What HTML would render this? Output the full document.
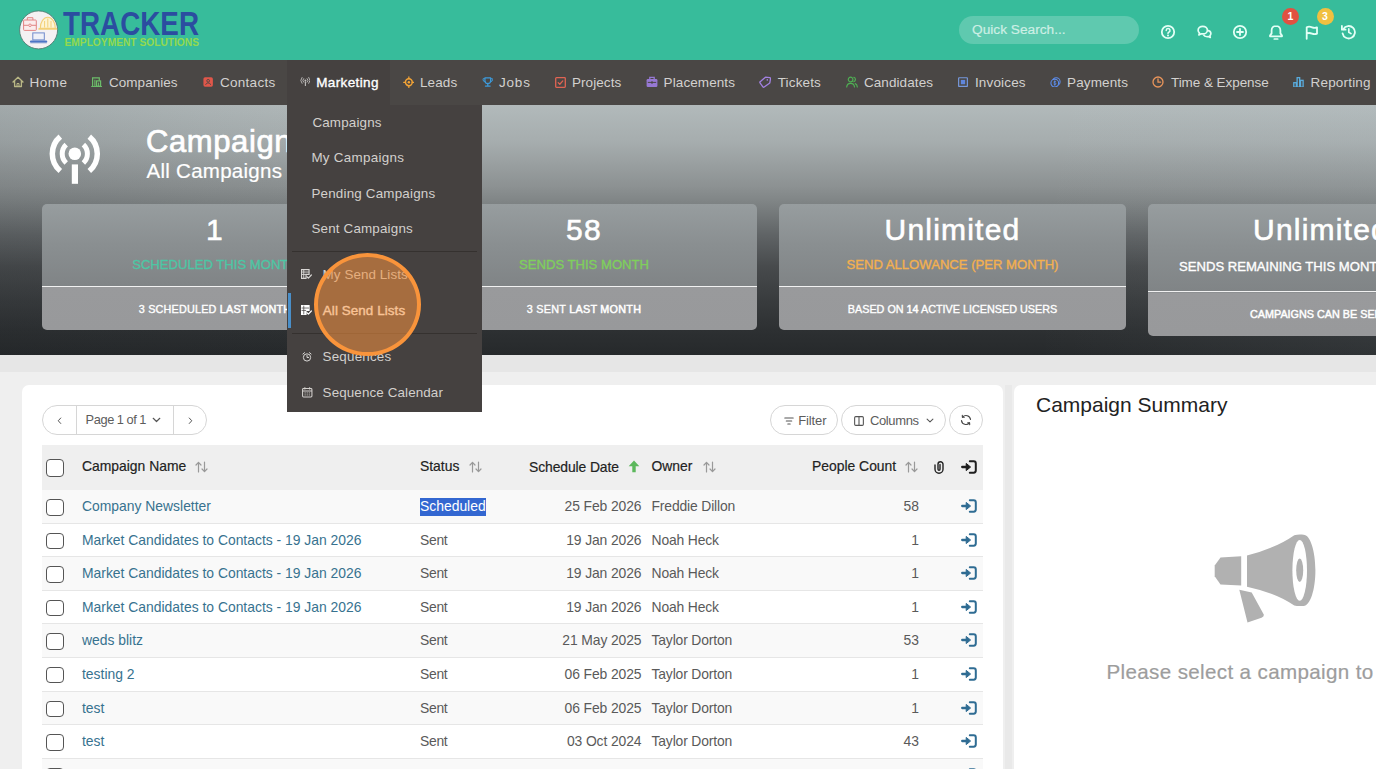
<!DOCTYPE html>
<html lang="en">
<head>
<meta charset="utf-8">
<title>Campaigns</title>
<style>
*{box-sizing:border-box;margin:0;padding:0}
html,body{width:1376px;height:769px;overflow:hidden}
body{font-family:"Liberation Sans",sans-serif;background:#efefef;position:relative;color:#333}
.abs{position:absolute}
.t{position:absolute;white-space:nowrap;line-height:1}
.med{-webkit-text-stroke:.35px currentColor}
/* top bar */
#top{left:0;top:0;width:1376px;height:60px;background:#37bc9b}
#search{left:959px;top:16px;width:180px;height:28px;border-radius:14px;background:rgba(255,255,255,.2)}
#top svg{position:absolute}
.badge{position:absolute;width:17px;height:17px;border-radius:50%;color:#fff;font-size:10.5px;font-weight:bold;text-align:center;line-height:17px}
/* nav */
#nav{z-index:1;left:0;top:60px;width:1376px;height:44.500px;background:#4a4745}
#nav .t{top:16.2px;font-size:13.5px;color:#d3d1cf}
#nav svg{position:absolute}
#navact{left:287px;top:0;width:103px;height:44.500px;background:#454140}
/* hero */
#hero{left:0;top:104px;width:1376px;height:250.7px;overflow:hidden;background:linear-gradient(90deg,rgba(20,25,30,.10) 0,rgba(20,25,30,.04) 15%,rgba(20,25,30,0) 28%,rgba(200,215,225,0) 75%,rgba(200,215,225,.06) 100%),linear-gradient(180deg,#b2babb 0%,#a6adae 15%,#8c9192 33%,#7f8485 39%,#606466 52%,#474a4c 65%,#393c3e 78%,#2d3032 90%,#26292b 100%)}
.stat{position:absolute;top:100px;height:126px;border-radius:5px;background:linear-gradient(180deg,#979d9f 0,#8a8f91 40px,#808486 82px,#999a9c 83px,#98999b 100%)}
.stat .ln{position:absolute;left:0;right:0;top:81.6px;height:1.25px;background:#f1f1f1}
.stat .big{position:absolute;left:0;right:0;text-align:center;color:#fff;font-size:30px;top:11px;line-height:1;letter-spacing:1.2px;-webkit-text-stroke:.6px #fff}
.stat .lab{position:absolute;left:0;right:0;text-align:center;font-size:13.1px;top:53.5px;line-height:1}
.stat .sub b{font-weight:normal;-webkit-text-stroke:.5px #fff}
.stat .sub{position:absolute;left:0;right:0;text-align:center;font-size:10.8px;top:100px;line-height:1;color:#fff}
/* dropdown */
#dd{left:287px;top:104px;width:195px;height:307.5px;background:#454140}
#dd .t{font-size:13.4px;color:#d3d0cd}
#dd .sep{position:absolute;left:5px;right:5px;height:1px;background:#35312f}
#dd svg{position:absolute;left:14px}
#ring{left:314.2px;top:253.2px;width:107px;height:103px;border-radius:50%;background:rgba(245,146,62,.55);border:4.5px solid #f9943b}
/* cards */
#card{left:22px;top:385px;width:981px;height:400px;background:#fff;border-radius:7px}
#side{left:1014px;top:385px;width:380px;height:400px;background:#fff;border-radius:7px}
.pill{position:absolute;top:20px;height:30px;border:1px solid #d6d6d6;border-radius:15px;background:#fff}
.pill .t{font-size:13.5px;color:#5c5c5c;top:7.5px}
.pill svg{position:absolute}
#thead{left:20px;top:60px;width:941px;height:44.5px;background:#efefef}
.row{position:absolute;left:20px;width:941px;border-bottom:1px solid #e6e6e6;background:#fff}
.row.odd{background:#f9f9f9}
.cb{position:absolute;left:4px;width:18px;height:16.5px;border:1.3px solid #555;border-radius:4px;background:#fff}
.row .t{font-size:13.9px;top:10px;color:#5a5a5a}
.row .nm{left:40px;color:#37728f}
.row .st{left:378px;letter-spacing:-.3px}
.row .dt{right:341.5px;letter-spacing:-.1px}
.row .ow{left:609.5px;letter-spacing:-.15px}
.row .pc{right:64px}
.sel{background:#3367d1;color:#fff;display:inline-block;padding:2px 0 2px;margin:-2px 0;letter-spacing:0}
.ent{position:absolute;left:919.2px;top:9.3px}
.srt{position:absolute;top:16px}
#thead .t{font-size:13.9px;top:14.5px;color:#222;-webkit-text-stroke:.18px #222}
</style>
</head>
<body>
<div id="top" class="abs">
  <!-- logo -->
  <svg style="left:18px;top:9px" width="185" height="42" viewBox="0 0 185 42">
    <circle cx="20.600" cy="20.900" r="19" fill="#f4f1f3" stroke="#4f7a70" stroke-width=".9"/>
    <rect x="5.600" y="11" width="12.700" height="10.400" rx=".8" fill="#fbecec" stroke="#e28484" stroke-width="1"/>
    <path d="M9.300 11V8.700h5.600V11M5.600 16.300h12.700" fill="none" stroke="#e28484" stroke-width="1"/>
    <circle cx="12" cy="16.300" r="1.300" fill="#fbecec" stroke="#e28484" stroke-width=".9"/>
    <path d="M22.300 19.200a7.500 11 0 0 1 15 0z" fill="#fdf4d4" stroke="#f3d077" stroke-width="1.100"/>
    <path d="M21.200 19.900h17.200" stroke="#f3d077" stroke-width="1.800" stroke-linecap="round"/>
    <path d="M26.600 12v6.500M29.800 9.500v9M33 12v6.500" stroke="#f3d077" stroke-width="1"/>
    <rect x="14.800" y="23.900" width="11.500" height="7" fill="#eef0f8" stroke="#6f8acb" stroke-width="1"/>
    <path d="M13 32.700h15.200" stroke="#4d75c6" stroke-width="2.200" stroke-linecap="round"/>
    <path d="M12.300 34.300h16.600" stroke="#b9c3df" stroke-width=".7"/>
    <text x="45" y="26" font-family="Liberation Sans,sans-serif" font-weight="bold" font-size="33" fill="#2b4da0" textLength="136" lengthAdjust="spacingAndGlyphs">TRACKER</text>
    <text x="46.5" y="37" font-family="Liberation Sans,sans-serif" font-weight="bold" font-size="10.6" fill="#93d94e" textLength="134.5" lengthAdjust="spacingAndGlyphs">EMPLOYMENT SOLUTIONS</text>
  </svg>
  <div id="search" class="abs"></div>
  <div class="t" style="left:972px;top:23px;font-size:13.7px;color:#cdefe5;-webkit-text-stroke:.2px #cdefe5">Quick Search...</div>
  <!-- help -->
  <svg style="left:1160px;top:24px" width="16" height="16" viewBox="0 0 16 16"><circle cx="8" cy="8" r="6.200" fill="none" stroke="#e4fff6" stroke-width="1.800"/><path d="M6.200 6.400a1.900 1.900 0 1 1 2.600 1.800c-.5.300-.8.600-.8 1.200" fill="none" stroke="#e4fff6" stroke-width="1.500" stroke-linecap="round"/><circle cx="8" cy="11.400" r="1" fill="#e4fff6"/></svg>
  <!-- chat -->
  <svg style="left:1196px;top:25px" width="17" height="14" viewBox="0 0 18 16"><path d="M7 1.600c3 0 5.300 1.900 5.300 4.300S10 10.200 7 10.200c-.6 0-1.200-.1-1.700-.2L2.600 11.300l.6-2.300C2.200 8.200 1.700 7.100 1.700 5.900 1.700 3.500 4 1.600 7 1.600z" fill="none" stroke="#e4fff6" stroke-width="1.900" stroke-linejoin="round"/><path d="M12.300 6.200c2.300.2 4 1.700 4 3.600 0 1-.4 1.800-1.200 2.500l.5 2-2.300-1.100c-.5.100-.9.200-1.400.2-1.900 0-3.500-.9-4.200-2.300" fill="none" stroke="#e4fff6" stroke-width="1.900" stroke-linejoin="round"/></svg>
  <!-- plus -->
  <svg style="left:1232px;top:24px" width="16" height="16" viewBox="0 0 16 16"><circle cx="8" cy="8" r="6.200" fill="none" stroke="#e4fff6" stroke-width="1.800"/><path d="M8 5v6M5 8h6" stroke="#e4fff6" stroke-width="1.800" stroke-linecap="round"/></svg>
  <!-- bell -->
  <svg style="left:1268px;top:24px" width="16" height="17" viewBox="0 0 16 17"><path d="M8 1.900c-2.600 0-4.400 1.900-4.400 4.500v3L2 11.600v.7h12v-.7l-1.600-2.200v-3c0-2.600-1.800-4.500-4.400-4.500z" fill="none" stroke="#e4fff6" stroke-width="1.800" stroke-linejoin="round"/><path d="M6.300 15h3.400" stroke="#e4fff6" stroke-width="1.700" stroke-linecap="round"/></svg>
  <!-- flag -->
  <svg style="left:1304px;top:24px" width="16" height="17" viewBox="0 0 16 17"><path d="M2.700 14.800V3.200c2-.9 3.600-.6 5.300.1s3.300.8 5 .1v6.300c-1.700.7-3.300.6-5-.1s-3.300-1-5.300-.1" fill="none" stroke="#e4fff6" stroke-width="1.800" stroke-linejoin="round" stroke-linecap="round"/></svg>
  <!-- history -->
  <svg style="left:1340px;top:24px" width="17" height="16" viewBox="0 0 17 16"><path d="M3.300 5.200A6.200 6.200 0 1 1 2.600 9.300" fill="none" stroke="#e4fff6" stroke-width="1.800" stroke-linecap="round"/><path d="M1.900 2v3.700h3.700" fill="none" stroke="#e4fff6" stroke-width="1.800" stroke-linecap="round" stroke-linejoin="round"/><path d="M8.800 4.900v3.300l2.200 1.400" fill="none" stroke="#e4fff6" stroke-width="1.700" stroke-linecap="round" stroke-linejoin="round"/></svg>
  <div class="badge" style="left:1282px;top:7.500px;background:#e25141">1</div>
  <div class="badge" style="left:1316.500px;top:7.500px;background:#f1c040">3</div>
</div>
<div id="nav" class="abs">
  <div id="navact" class="abs"></div>
  <!-- home -->
  <svg style="left:12px;top:16px" width="12" height="12" viewBox="0 0 12 12"><path d="M1 6L6 1.200 11 6M2.600 5v5.500h6.800V5" fill="none" stroke="#b9b785" stroke-width="1.300" stroke-linejoin="round" stroke-linecap="round"/><path d="M5 10.500V7.500h2v3" fill="none" stroke="#b9b785" stroke-width="1"/></svg>
  <div class="t" style="left:29.5px;letter-spacing:0.47px">Home</div>
  <!-- companies -->
  <svg style="left:91px;top:16.700px" width="11.400" height="10.600" viewBox="0 0 11.400 10.600"><path d="M1.600 9.200V.900h6.700v2.800" fill="none" stroke="#6cbd6a" stroke-width="1.200"/><path d="M3.900 2.800v6.400" stroke="#6cbd6a" stroke-width="1.100"/><rect x="5.600" y="3.900" width="4" height="5.300" fill="none" stroke="#6cbd6a" stroke-width="1.200"/><path d="M7.600 5.600v3.600" stroke="#6cbd6a" stroke-width="1"/><path d="M.2 9.800h11" stroke="#6cbd6a" stroke-width="1.500"/></svg>
  <div class="t" style="left:109px;letter-spacing:0.03px">Companies</div>
  <!-- contacts -->
  <svg style="left:203px;top:17px" width="10.300" height="10" viewBox="0 0 11 11"><rect x=".3" y=".3" width="10.400" height="10.400" rx="1.800" fill="#e0574a"/><circle cx="5.500" cy="4.200" r="1.500" fill="none" stroke="#4a4745" stroke-width="1"/><path d="M2.800 8.600c.3-1.500 1.300-2 2.700-2s2.400.5 2.700 2" fill="none" stroke="#4a4745" stroke-width="1"/></svg>
  <div class="t" style="left:219.9px;letter-spacing:0.3px">Contacts</div>
  <!-- marketing -->
  <svg style="left:299.500px;top:17.300px" width="10.800" height="9.900" viewBox="0 0 12 11"><circle cx="6" cy="3.800" r="1.100" fill="#c2c0be"/><path d="M6 5v5" stroke="#c2c0be" stroke-width="1.200"/><path d="M4 1.800a2.800 2.800 0 0 0 0 4M8 1.800a2.800 2.800 0 0 1 0 4M2.200.500a5 5 0 0 0 0 6.600M9.800.500a5 5 0 0 1 0 6.600" fill="none" stroke="#c2c0be" stroke-width="1" stroke-linecap="round"/></svg>
  <div class="t med" style="left:316.2px;letter-spacing:0.38px;color:#fff">Marketing</div>
  <!-- leads -->
  <svg style="left:402.800px;top:15.900px" width="11.700" height="12.500" viewBox="0 0 13 14"><circle cx="6.500" cy="7" r="3.800" fill="none" stroke="#f2a336" stroke-width="1.700"/><circle cx="6.500" cy="7" r="1.400" fill="#f2a336"/><path d="M6.500 1v2M6.500 11v2M.700 7h2M10.300 7h2" stroke="#f2a336" stroke-width="1.400" stroke-linecap="round"/></svg>
  <div class="t" style="left:420px;letter-spacing:0.11px">Leads</div>
  <!-- jobs -->
  <svg style="left:481.800px;top:17.100px" width="11.600" height="10.400" viewBox="0 0 13 12"><path d="M3.200 1h6.600v3.200a3.300 3.300 0 0 1-6.600 0z" fill="none" stroke="#3d9bdb" stroke-width="1.400" stroke-linejoin="round"/><path d="M3.200 2H1v1a2.300 2.300 0 0 0 2.500 2.300M9.800 2H12v1a2.300 2.300 0 0 1-2.500 2.300" fill="none" stroke="#3d9bdb" stroke-width="1.100"/><path d="M6.500 7.500v2M3.800 10.500h5.400" stroke="#3d9bdb" stroke-width="1.500" stroke-linecap="round"/></svg>
  <div class="t" style="left:499px;letter-spacing:0.8px">Jobs</div>
  <!-- projects -->
  <svg style="left:554.500px;top:16.500px" width="11" height="11" viewBox="0 0 11 11"><rect x=".7" y=".7" width="9.600" height="9.600" rx=".8" fill="none" stroke="#e06453" stroke-width="1.300"/><path d="M3.200 5.600l1.600 1.600 3-3.300" fill="none" stroke="#e06453" stroke-width="1.300" stroke-linecap="round" stroke-linejoin="round"/></svg>
  <div class="t" style="left:571.9px;letter-spacing:0.09px">Projects</div>
  <!-- placements -->
  <svg style="left:646px;top:16px" width="12" height="12" viewBox="0 0 12 12"><rect x=".6" y="3" width="10.800" height="8" rx="1.200" fill="#9678d3"/><path d="M3.800 3V1.300h4.400V3" fill="none" stroke="#9678d3" stroke-width="1.300"/><path d="M1.800 6.400h8.400" stroke="#4a4745" stroke-width="1"/><rect x="5" y="5.500" width="2" height="2" fill="#4a4745"/></svg>
  <div class="t" style="left:663.6px;letter-spacing:0.09px">Placements</div>
  <!-- tickets -->
  <svg style="left:759px;top:16px" width="12" height="12" viewBox="0 0 12 12"><path d="M5.800 1.200l4.300-.1c.5 0 .9.400.9.900l-.1 4.300-5 4.800c-.4.400-.9.400-1.300 0L1.200 7.600c-.4-.4-.4-.9 0-1.300z" transform="rotate(8 6 6)" fill="none" stroke="#a382e2" stroke-width="1.300" stroke-linejoin="round"/><circle cx="8.300" cy="3.900" r=".8" fill="#a382e2"/></svg>
  <div class="t" style="left:777.7px;letter-spacing:0.15px">Tickets</div>
  <!-- candidates -->
  <svg style="left:846px;top:16px" width="12" height="12" viewBox="0 0 12 12"><circle cx="4.600" cy="3.500" r="2.300" fill="none" stroke="#4fb053" stroke-width="1.200"/><path d="M.700 11c.2-2.400 1.700-3.700 3.900-3.700s3.700 1.300 3.900 3.700" fill="none" stroke="#4fb053" stroke-width="1.200" stroke-linecap="round"/><path d="M7.800 1.300a2.300 2.300 0 0 1 0 4.400M9.300 7.600c1.200.5 1.900 1.700 2 3.400" fill="none" stroke="#4fb053" stroke-width="1.200" stroke-linecap="round"/></svg>
  <div class="t" style="left:863.9px;letter-spacing:0.09px">Candidates</div>
  <!-- invoices -->
  <svg style="left:957.800px;top:16.800px" width="10" height="10.200" viewBox="0 0 11 11"><rect x=".7" y=".7" width="9.600" height="9.600" rx=".5" fill="none" stroke="#7698dc" stroke-width="1.300"/><rect x="3.100" y="3.100" width="4.800" height="4.800" fill="#5f86dc"/></svg>
  <div class="t" style="left:974.9px;letter-spacing:0.17px">Invoices</div>
  <!-- payments -->
  <svg style="left:1050px;top:16.600px" width="11" height="10.800" viewBox="0 0 12 12"><circle cx="6.800" cy="5.200" r="4.300" fill="none" stroke="#5d8ff0" stroke-width="1.200"/><circle cx="5.200" cy="6.800" r="4.300" fill="#4a4745" stroke="#5d8ff0" stroke-width="1.200"/><path d="M6.500 5.300c-.4-.5-2.400-.7-2.400.4s2.400.6 2.400 1.800-2.100 1-2.600.3M5.200 3.800v6" fill="none" stroke="#5d8ff0" stroke-width=".9"/></svg>
  <div class="t" style="left:1067px;letter-spacing:0.14px">Payments</div>
  <!-- time -->
  <svg style="left:1152px;top:16px" width="12" height="12" viewBox="0 0 12 12"><circle cx="6" cy="6" r="5" fill="none" stroke="#e9955b" stroke-width="1.300"/><path d="M6 3v3.200h2.600" fill="none" stroke="#e9955b" stroke-width="1.300" stroke-linecap="round" stroke-linejoin="round"/></svg>
  <div class="t" style="left:1171px;letter-spacing:-0.06px">Time &amp; Expense</div>
  <!-- reporting -->
  <svg style="left:1293.200px;top:16.600px" width="11" height="10.800" viewBox="0 0 11 11"><rect x=".7" y="5.800" width="2.600" height="4.500" fill="none" stroke="#5aaee0" stroke-width="1.300"/><rect x="4.100" y=".7" width="2.600" height="9.600" fill="none" stroke="#5aaee0" stroke-width="1.300"/><rect x="7.600" y="3.400" width="2.600" height="6.900" fill="none" stroke="#5aaee0" stroke-width="1.300"/></svg>
  <div class="t" style="left:1310.5px;letter-spacing:0.19px">Reporting</div>
</div>
<div id="hero" class="abs">
  <!-- broadcast icon -->
  <svg class="abs" style="left:48px;top:30px" width="54" height="52" viewBox="0 0 54 52">
    <circle cx="26.800" cy="19.800" r="6.300" fill="#fff"/>
    <rect x="23.800" y="30.400" width="6.200" height="19.400" fill="#fff"/>
    <path d="M18.2 10.600A12.600 12.600 0 0 0 18.2 29M35.400 10.600A12.600 12.600 0 0 1 35.400 29" fill="none" stroke="#fff" stroke-width="5"/>
    <path d="M12.300 2.600A22.500 22.500 0 0 0 12.300 37M41.300 2.600A22.500 22.500 0 0 1 41.300 37" fill="none" stroke="#fff" stroke-width="5.500"/>
  </svg>
  <div class="t" style="left:146px;top:21.5px;font-size:31px;color:#fff;letter-spacing:.6px;-webkit-text-stroke:.7px #fff">Campaigns</div>
  <div class="t" style="left:146.5px;top:57px;font-size:20.5px;color:#fff;letter-spacing:.27px;-webkit-text-stroke:.2px #fff">All Campaigns</div>
  <div class="stat" style="left:42px;width:346px">
    <div class="ln"></div>
    <div class="big med">1</div>
    <div class="lab med" style="color:#4dc6a4">SCHEDULED THIS MONTH</div>
    <div class="sub med" style="letter-spacing:.2px">3 SCHEDULED <b>LAST MONTH</b></div>
  </div>
  <div class="stat" style="left:411px;width:346px">
    <div class="ln"></div>
    <div class="big med">58</div>
    <div class="lab med" style="color:#7fcf5c">SENDS THIS MONTH</div>
    <div class="sub med" style="letter-spacing:.27px">3 SENT <b>LAST MONTH</b></div>
  </div>
  <div class="stat" style="left:779px;width:347px">
    <div class="ln"></div>
    <div class="big med">Unlimited</div>
    <div class="lab med" style="color:#f3b04f">SEND ALLOWANCE (PER MONTH)</div>
    <div class="sub med">BASED ON <b>14</b> ACTIVE LICENSED USERS</div>
  </div>
  <div class="stat" style="left:1148px;width:346px;height:132px;background:linear-gradient(180deg,#979d9f 0,#8a8f91 42px,#808486 88px,#999a9c 89px,#98999b 100%)">
    <div class="ln" style="top:87.1px"></div>
    <div class="big med">Unlimited</div>
    <div class="t med" style="left:31px;top:55.5px;font-size:13.1px;color:#fff">SENDS REMAINING THIS MONTH</div>
    <div class="t med" style="left:102px;top:104.5px;font-size:10.8px;color:#fff;-webkit-text-stroke:.45px #fff">CAMPAIGNS CAN BE SENT</div>
  </div>
</div>
<div class="abs" style="left:0;top:355px;width:1376px;height:17.3px;background:#e6e6e6"></div>
<div class="abs" style="left:1005px;top:385px;width:7px;height:390px;background:#e9e9e9"></div>
<div id="card" class="abs">
  <div class="pill" style="left:20px;width:165px">
    <div class="abs" style="left:33px;top:0;width:1px;height:28px;background:#d6d6d6"></div>
    <div class="abs" style="left:130px;top:0;width:1px;height:28px;background:#d6d6d6"></div>
    <svg style="left:13.500px;top:10.700px" width="5" height="7.500" viewBox="0 0 6 9"><path d="M4.500 1.200L1.500 4.500l3 3.300" fill="none" stroke="#555" stroke-width="1.200" stroke-linecap="round" stroke-linejoin="round"/></svg>
    <div class="t" style="left:42.5px;font-size:12.8px;letter-spacing:-.36px;word-spacing:-.3px;top:8.2px">Page 1 of 1</div>
    <svg style="left:109px;top:11px" width="9" height="6" viewBox="0 0 9 6"><path d="M1.200 1.300L4.500 4.500l3.300-3.200" fill="none" stroke="#555" stroke-width="1.200" stroke-linecap="round" stroke-linejoin="round"/></svg>
    <svg style="left:144.500px;top:10.700px" width="5" height="7.500" viewBox="0 0 6 9"><path d="M1.500 1.200l3 3.300-3 3.300" fill="none" stroke="#555" stroke-width="1.200" stroke-linecap="round" stroke-linejoin="round"/></svg>
  </div>
  <div class="pill" style="left:748px;width:68px">
    <svg style="left:12.500px;top:10.500px" width="10" height="8" viewBox="0 0 10 8"><path d="M.800 1h8.400M2.300 4h5.400M3.800 7h2.400" stroke="#555" stroke-width="1.100" stroke-linecap="round"/></svg>
    <div class="t" style="left:27.2px;font-size:13px;letter-spacing:-.1px;top:8px">Filter</div>
  </div>
  <div class="pill" style="left:819px;width:105px">
    <svg style="left:12px;top:9.500px" width="10" height="10" viewBox="0 0 11 11"><rect x=".7" y=".7" width="9.600" height="9.600" rx="1.200" fill="none" stroke="#555" stroke-width="1.200"/><path d="M5.500 1v9" stroke="#555" stroke-width="1.200"/></svg>
    <div class="t" style="left:28px;font-size:13px;letter-spacing:-.38px;top:8px">Columns</div>
    <svg style="left:84px;top:12px" width="8" height="5.300" viewBox="0 0 9 6"><path d="M1.200 1.300L4.500 4.500l3.300-3.200" fill="none" stroke="#555" stroke-width="1.200" stroke-linecap="round" stroke-linejoin="round"/></svg>
  </div>
  <div class="pill" style="left:927px;width:34px">
    <svg style="left:9.800px;top:7.800px" width="12" height="12" viewBox="0 0 12 12"><path d="M10.500 5.400A4.500 4.500 0 0 0 2.600 3.100M1.500 6.600A4.500 4.500 0 0 0 9.400 8.900" fill="none" stroke="#444" stroke-width="1.150" stroke-linecap="round"/><path d="M2.300 1.400l.1 1.900 1.900-.1M9.700 10.600l-.1-1.900-1.900.1" fill="none" stroke="#444" stroke-width="1.100" stroke-linecap="round" stroke-linejoin="round"/></svg>
  </div>
  <div id="thead" class="abs">
    <div class="cb" style="top:14px;height:17.5px"></div>
    <div class="t med" style="left:40px">Campaign Name</div><svg class="srt" style="left:153px" width="13" height="12" viewBox="0 0 13 12"><path d="M3.5 11V1.5M1 4l2.5-2.7L6 4M9.5 1v9.5M7 8l2.5 2.7L12 8" fill="none" stroke="#999" stroke-width="1.2" stroke-linecap="round" stroke-linejoin="round"/></svg>
    <div class="t med" style="left:378px">Status</div><svg class="srt" style="left:427px" width="13" height="12" viewBox="0 0 13 12"><path d="M3.5 11V1.5M1 4l2.5-2.7L6 4M9.5 1v9.5M7 8l2.5 2.7L12 8" fill="none" stroke="#999" stroke-width="1.2" stroke-linecap="round" stroke-linejoin="round"/></svg>
    <div class="t med" style="left:487px;top:15.5px;letter-spacing:-.1px">Schedule Date</div>
    <svg class="abs" style="left:586px;top:15px" width="12" height="13" viewBox="0 0 12 13"><path d="M6 .500L11.300 6.300H7.700V12.300H4.300V6.300H.700z" fill="#5cb85c"/></svg>
    <div class="t med" style="left:609.500px">Owner</div><svg class="srt" style="left:661px" width="13" height="12" viewBox="0 0 13 12"><path d="M3.5 11V1.5M1 4l2.5-2.7L6 4M9.5 1v9.5M7 8l2.5 2.7L12 8" fill="none" stroke="#999" stroke-width="1.2" stroke-linecap="round" stroke-linejoin="round"/></svg>
    <div class="t med" style="left:770px">People Count</div><svg class="srt" style="left:863px" width="13" height="12" viewBox="0 0 13 12"><path d="M3.5 11V1.5M1 4l2.5-2.7L6 4M9.5 1v9.5M7 8l2.5 2.7L12 8" fill="none" stroke="#999" stroke-width="1.2" stroke-linecap="round" stroke-linejoin="round"/></svg>
    <svg class="abs" style="left:891px;top:15px" width="12" height="14" viewBox="0 0 12 14"><path d="M2 5v4.200a4 4 0 0 0 8 0V4.200a2.500 2.500 0 0 0-5 0v5a1 1 0 0 0 2 0V4.500" fill="none" stroke="#222" stroke-width="1.400" stroke-linecap="round"/></svg>
    <span style="position:absolute;left:0;top:5.500px"><svg class="ent" width="16" height="14" viewBox="0 0 16 14"><path d="M8.800 1.300h3.900a2.100 2.100 0 0 1 2.100 2.100v7.200a2.100 2.100 0 0 1-2.100 2.100H8.800" fill="none" stroke="#1f1f1f" stroke-width="2" stroke-linecap="round"/><path d="M1.200 7h4.500" fill="none" stroke="#1f1f1f" stroke-width="2.300" stroke-linecap="round"/><path d="M5.200 3.400L9.600 7 5.200 10.600z" fill="#1f1f1f" stroke="#1f1f1f" stroke-width="1" stroke-linejoin="round"/></svg></span>
  </div>
  <div class="row odd" style="top:105px;height:33.5px">
    <div class="cb" style="top:9.3px"></div>
    <div class="t nm">Company Newsletter</div><div class="t st"><span class="sel">Scheduled</span></div><div class="t dt">25 Feb 2026</div><div class="t ow">Freddie Dillon</div><div class="t pc">58</div>
    <svg class="ent" width="16" height="14" viewBox="0 0 16 14"><path d="M8.800 1.300h3.900a2.100 2.100 0 0 1 2.100 2.100v7.200a2.100 2.100 0 0 1-2.100 2.100H8.800" fill="none" stroke="#2f6c93" stroke-width="2" stroke-linecap="round"/><path d="M1.200 7h4.500" fill="none" stroke="#2f6c93" stroke-width="2.300" stroke-linecap="round"/><path d="M5.200 3.400L9.600 7 5.200 10.600z" fill="#2f6c93" stroke="#2f6c93" stroke-width="1" stroke-linejoin="round"/></svg>
  </div>
  <div class="row" style="top:138.5px;height:33.5px">
    <div class="cb" style="top:9.3px"></div>
    <div class="t nm">Market Candidates to Contacts - 19 Jan 2026</div><div class="t st">Sent</div><div class="t dt">19 Jan 2026</div><div class="t ow">Noah Heck</div><div class="t pc">1</div>
    <svg class="ent" width="16" height="14" viewBox="0 0 16 14"><path d="M8.800 1.300h3.900a2.100 2.100 0 0 1 2.100 2.100v7.200a2.100 2.100 0 0 1-2.100 2.100H8.800" fill="none" stroke="#2f6c93" stroke-width="2" stroke-linecap="round"/><path d="M1.200 7h4.500" fill="none" stroke="#2f6c93" stroke-width="2.300" stroke-linecap="round"/><path d="M5.200 3.400L9.600 7 5.200 10.600z" fill="#2f6c93" stroke="#2f6c93" stroke-width="1" stroke-linejoin="round"/></svg>
  </div>
  <div class="row odd" style="top:172px;height:33.5px">
    <div class="cb" style="top:9.3px"></div>
    <div class="t nm">Market Candidates to Contacts - 19 Jan 2026</div><div class="t st">Sent</div><div class="t dt">19 Jan 2026</div><div class="t ow">Noah Heck</div><div class="t pc">1</div>
    <svg class="ent" width="16" height="14" viewBox="0 0 16 14"><path d="M8.800 1.300h3.900a2.100 2.100 0 0 1 2.100 2.100v7.200a2.100 2.100 0 0 1-2.100 2.100H8.800" fill="none" stroke="#2f6c93" stroke-width="2" stroke-linecap="round"/><path d="M1.200 7h4.500" fill="none" stroke="#2f6c93" stroke-width="2.300" stroke-linecap="round"/><path d="M5.200 3.400L9.600 7 5.200 10.600z" fill="#2f6c93" stroke="#2f6c93" stroke-width="1" stroke-linejoin="round"/></svg>
  </div>
  <div class="row" style="top:205.5px;height:33.5px">
    <div class="cb" style="top:9.3px"></div>
    <div class="t nm">Market Candidates to Contacts - 19 Jan 2026</div><div class="t st">Sent</div><div class="t dt">19 Jan 2026</div><div class="t ow">Noah Heck</div><div class="t pc">1</div>
    <svg class="ent" width="16" height="14" viewBox="0 0 16 14"><path d="M8.800 1.300h3.900a2.100 2.100 0 0 1 2.100 2.100v7.200a2.100 2.100 0 0 1-2.100 2.100H8.800" fill="none" stroke="#2f6c93" stroke-width="2" stroke-linecap="round"/><path d="M1.200 7h4.500" fill="none" stroke="#2f6c93" stroke-width="2.300" stroke-linecap="round"/><path d="M5.200 3.400L9.600 7 5.200 10.600z" fill="#2f6c93" stroke="#2f6c93" stroke-width="1" stroke-linejoin="round"/></svg>
  </div>
  <div class="row odd" style="top:239px;height:33.5px">
    <div class="cb" style="top:9.3px"></div>
    <div class="t nm">weds blitz</div><div class="t st">Sent</div><div class="t dt">21 May 2025</div><div class="t ow">Taylor Dorton</div><div class="t pc">53</div>
    <svg class="ent" width="16" height="14" viewBox="0 0 16 14"><path d="M8.800 1.300h3.900a2.100 2.100 0 0 1 2.100 2.100v7.200a2.100 2.100 0 0 1-2.100 2.100H8.800" fill="none" stroke="#2f6c93" stroke-width="2" stroke-linecap="round"/><path d="M1.200 7h4.500" fill="none" stroke="#2f6c93" stroke-width="2.300" stroke-linecap="round"/><path d="M5.200 3.400L9.600 7 5.200 10.600z" fill="#2f6c93" stroke="#2f6c93" stroke-width="1" stroke-linejoin="round"/></svg>
  </div>
  <div class="row" style="top:272.5px;height:34.0px">
    <div class="cb" style="top:9.3px"></div>
    <div class="t nm">testing 2</div><div class="t st">Sent</div><div class="t dt">06 Feb 2025</div><div class="t ow">Taylor Dorton</div><div class="t pc">1</div>
    <svg class="ent" width="16" height="14" viewBox="0 0 16 14"><path d="M8.800 1.300h3.900a2.100 2.100 0 0 1 2.100 2.100v7.200a2.100 2.100 0 0 1-2.100 2.100H8.800" fill="none" stroke="#2f6c93" stroke-width="2" stroke-linecap="round"/><path d="M1.200 7h4.500" fill="none" stroke="#2f6c93" stroke-width="2.300" stroke-linecap="round"/><path d="M5.200 3.400L9.600 7 5.200 10.600z" fill="#2f6c93" stroke="#2f6c93" stroke-width="1" stroke-linejoin="round"/></svg>
  </div>
  <div class="row odd" style="top:306.5px;height:33.5px">
    <div class="cb" style="top:9.3px"></div>
    <div class="t nm">test</div><div class="t st">Sent</div><div class="t dt">06 Feb 2025</div><div class="t ow">Taylor Dorton</div><div class="t pc">1</div>
    <svg class="ent" width="16" height="14" viewBox="0 0 16 14"><path d="M8.800 1.300h3.900a2.100 2.100 0 0 1 2.100 2.100v7.200a2.100 2.100 0 0 1-2.100 2.100H8.800" fill="none" stroke="#2f6c93" stroke-width="2" stroke-linecap="round"/><path d="M1.200 7h4.500" fill="none" stroke="#2f6c93" stroke-width="2.300" stroke-linecap="round"/><path d="M5.200 3.400L9.600 7 5.200 10.600z" fill="#2f6c93" stroke="#2f6c93" stroke-width="1" stroke-linejoin="round"/></svg>
  </div>
  <div class="row" style="top:340px;height:33.5px">
    <div class="cb" style="top:9.3px"></div>
    <div class="t nm">test</div><div class="t st">Sent</div><div class="t dt">03 Oct 2024</div><div class="t ow">Taylor Dorton</div><div class="t pc">43</div>
    <svg class="ent" width="16" height="14" viewBox="0 0 16 14"><path d="M8.800 1.300h3.900a2.100 2.100 0 0 1 2.100 2.100v7.200a2.100 2.100 0 0 1-2.100 2.100H8.800" fill="none" stroke="#2f6c93" stroke-width="2" stroke-linecap="round"/><path d="M1.200 7h4.500" fill="none" stroke="#2f6c93" stroke-width="2.300" stroke-linecap="round"/><path d="M5.200 3.400L9.600 7 5.200 10.600z" fill="#2f6c93" stroke="#2f6c93" stroke-width="1" stroke-linejoin="round"/></svg>
  </div>
  <div class="row odd" style="top:373.5px;height:34px">
    <div class="cb" style="top:9.3px"></div>
    <div class="t nm">test</div><div class="t st">Sent</div><div class="t dt">03 Oct 2024</div><div class="t ow">Taylor Dorton</div><div class="t pc">1</div>
    <svg class="ent" width="16" height="14" viewBox="0 0 16 14"><path d="M8.800 1.300h3.900a2.100 2.100 0 0 1 2.100 2.100v7.200a2.100 2.100 0 0 1-2.100 2.100H8.800" fill="none" stroke="#2f6c93" stroke-width="2" stroke-linecap="round"/><path d="M1.200 7h4.500" fill="none" stroke="#2f6c93" stroke-width="2.300" stroke-linecap="round"/><path d="M5.200 3.400L9.600 7 5.200 10.600z" fill="#2f6c93" stroke="#2f6c93" stroke-width="1" stroke-linejoin="round"/></svg>
  </div>
</div>
<div id="side" class="abs">
  <div class="t" style="left:22px;top:9px;font-size:21px;color:#222">Campaign Summary</div>
  <svg class="abs" style="left:200px;top:148px" width="104" height="92" viewBox="0 0 104 92">
    <path d="M6.500 24.400L27.200 23.300V52.500L6.500 51.400.700 43.200V32.600z" fill="#b1b1b1"/>
    <path d="M33 22.600Q62 15 80.300 2.200C83 1.400 86.500 1.400 89.600 1.700c6.500 0 11.800 16 11.800 35.600S96.100 72.900 89.600 72.900c-3.100.3-6.600.3-9.300-.3Q62 60 33 53.700z" fill="#b1b1b1"/>
    <ellipse cx="85.700" cy="37.300" rx="7.300" ry="30.400" fill="#fff"/>
    <ellipse cx="85.700" cy="37.300" rx="3.500" ry="11.700" fill="#b1b1b1"/>
    <path d="M25.300 56.800L37.700 59.600 49.900 81.800Q50 84 47.500 84.800L33.500 89.500z" fill="#b1b1b1"/>
  </svg>
  <div class="t" style="left:92.5px;top:277.2px;font-size:20.6px;letter-spacing:.35px;color:#9d9d9d;-webkit-text-stroke:.2px #9d9d9d">Please select a campaign to view</div>
</div>
<div id="dd" class="abs">
  <div class="abs" style="left:.7px;top:189px;width:3.3px;height:35px;background:#4a8fc9"></div>
  <div class="t" style="left:25.4px;top:11.8px;letter-spacing:0.18px">Campaigns</div>
  <div class="t" style="left:24.4px;top:46.8px;letter-spacing:0.29px">My Campaigns</div>
  <div class="t" style="left:24.4px;top:82.8px;letter-spacing:0.2px">Pending Campaigns</div>
  <div class="t" style="left:24.4px;top:117.8px;letter-spacing:0.18px">Sent Campaigns</div>
  <div class="sep" style="top:147px"></div>
  <svg style="top:165px;left:14.400px" width="11" height="10.300" viewBox="0 0 12 11"><path d="M.6.600h8.200v5.200H5.500v4.300H.6z" fill="none" stroke="#d8d6d4" stroke-width="1.200"/><path d="M.6 3.200h8.200M.6 5.800h5M3 .6v9.500" stroke="#d8d6d4" stroke-width="1"/><path d="M6.500 8.300l1.600 1.600 3.200-3.500" fill="none" stroke="#d8d6d4" stroke-width="1.300" stroke-linecap="round" stroke-linejoin="round"/></svg>
  <div class="t" style="left:35.6px;top:163.8px;letter-spacing:0.08px">My Send Lists</div>
  <svg style="top:200.800px;left:14.400px" width="11" height="10.300" viewBox="0 0 12 11"><path d="M.6.600h8.200v5.200H5.500v4.300H.6z" fill="#fff" stroke="#fff" stroke-width="1.200"/><path d="M.6 3.200h8.200M.6 5.800h5M3 .6v9.500" stroke="#454140" stroke-width=".8"/><path d="M6.500 8.300l1.600 1.600 3.200-3.500" fill="none" stroke="#fff" stroke-width="1.300" stroke-linecap="round" stroke-linejoin="round"/></svg>
  <div class="t med" style="left:35.8px;top:199.8px;letter-spacing:0.09px;color:#fff">All Send Lists</div>
  <div class="sep" style="top:229px"></div>
  <svg style="top:247.500px;left:15.300px" width="10" height="10" viewBox="0 0 11 11"><circle cx="5.500" cy="6" r="4" fill="none" stroke="#d8d6d4" stroke-width="1.100"/><path d="M5.500 3.800V6h1.800M1 2.200l1.800-1.500M10 2.200L8.200.700" fill="none" stroke="#d8d6d4" stroke-width="1.100" stroke-linecap="round"/></svg>
  <div class="t" style="left:35.6px;top:245.8px;letter-spacing:0.2px">Sequences</div>
  <svg style="top:283px;left:15px" width="10.500" height="10.500" viewBox="0 0 11 11"><rect x=".6" y="1.600" width="9.800" height="8.800" rx="1" fill="none" stroke="#d3d0cd" stroke-width="1.100"/><path d="M.6 4.200h9.800M3 .300v2.200M8 .300v2.200" stroke="#d3d0cd" stroke-width="1.100"/><path d="M2.700 6.200h1.200M4.900 6.200h1.200M7.100 6.200h1.200M2.700 8.300h1.200M4.900 8.300h1.200M7.100 8.300h1.200" stroke="#d3d0cd" stroke-width=".9"/></svg>
  <div class="t" style="left:35.6px;top:281.8px;letter-spacing:0.12px">Sequence Calendar</div>
</div>
<div id="ring" class="abs"></div>
</body>
</html>
